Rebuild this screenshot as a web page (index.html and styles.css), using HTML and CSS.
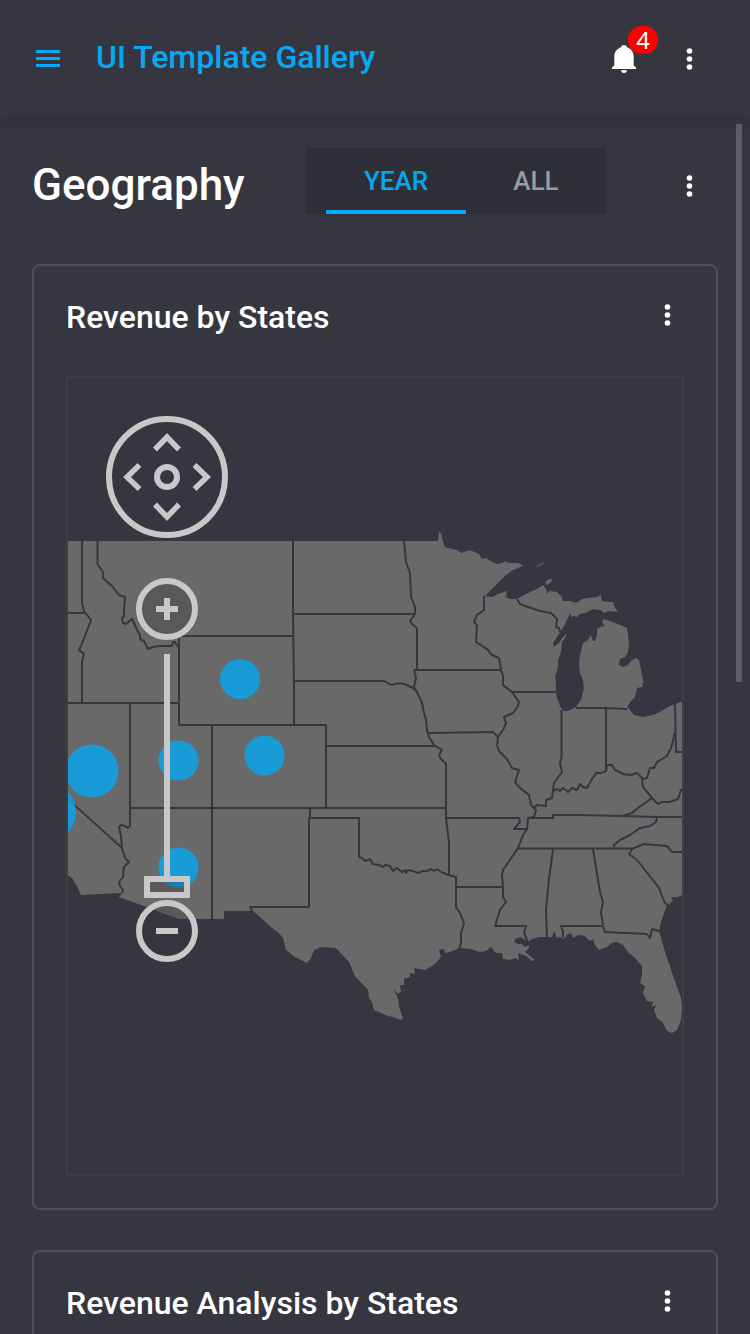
FILE: index.html
```html
<!DOCTYPE html>
<html lang="en">
<head>
<meta charset="utf-8">
<meta name="viewport" content="width=device-width, initial-scale=1">
<title>UI Template Gallery</title>
<link rel="stylesheet" href="styles.css">
</head>
<body>
<svg class="defs" aria-hidden="true">
  <symbol id="dots" viewBox="0 0 24 24">
    <circle cx="11.500" cy="4" r="2.800"/><circle cx="11.500" cy="12" r="2.800"/><circle cx="11.500" cy="20" r="2.800"/>
  </symbol>
  <symbol id="chevron" viewBox="0 0 36 36"><path d="M6 26.500L18 14L30 26.500" fill="none" stroke="currentColor" stroke-width="5.500"/></symbol>
</svg>
<div class="app">
  <header class="topbar">
    <button class="icon-btn menu-btn" type="button" aria-label="Menu">
      <svg width="24" height="18" viewBox="0 0 24 18" fill="currentColor"><path d="M0 0h24v3H0zM0 7h24v3H0zM0 14h24v3H0z"/></svg>
    </button>
    <span class="brand">UI Template Gallery</span>
    <button class="icon-btn bell-btn" type="button" aria-label="Notifications">
      <svg width="24" height="28" viewBox="0 0 24 28" fill="currentColor"><path d="M12 0c1.600 0 2.600.8 2.900 2.200C19 3.600 21.700 7 21.700 11.500V20.500L24 22.400V24H0v-1.600L2.300 20.500v-9C2.300 7 5 3.600 9.100 2.200 9.400.8 10.400 0 12 0zM9 25.200h6c-.2 1.700-1.400 2.800-3 2.800s-2.800-1.100-3-2.800z"/></svg>
      <span class="badge">4</span>
    </button>
    <button class="icon-btn" type="button" aria-label="More"><svg class="dots"><use href="#dots"/></svg></button>
  </header>

  <main class="content">
    <div class="page-head">
      <h1 class="page-title">Geography</h1>
      <div class="tabs" role="tablist">
        <button class="tab tab-active" type="button" role="tab" aria-selected="true">YEAR</button>
        <button class="tab" type="button" role="tab" aria-selected="false">ALL</button>
      </div>
      <button class="icon-btn" type="button" aria-label="Page options"><svg class="dots"><use href="#dots"/></svg></button>
    </div>

    <section class="card">
      <div class="card-head">
        <h2 class="card-title">Revenue by States</h2>
        <button class="icon-btn" type="button" aria-label="Card options"><svg class="dots"><use href="#dots"/></svg></button>
      </div>
      <div class="map">
        <svg class="map-canvas" viewBox="68 378 614 796" preserveAspectRatio="xMinYMin slice" role="img" aria-label="Map of the United States">
          <path class="land" d="M60 541H438L439 532L441 533L442.500 540L445 547L452 549L457 550L461 553L467 551L470 550.300L477 553L479 554L482 559L486 558L492 562L497 564L502 563L506 561L508 563H519L523 566L513 570L506 575L495 586L485 596L492 597L498 594L507 591L506 597L510 599H517L522 596L528 593L537 589L543 585L546 589L547 594L549 591L557 592L561 596L563 601H570L576 603L582 599L588 598L597 597L601 595L602 601L608 602H613L615 608L618 612L608 611L605 613L600 610L593 609L585 613L579 614L577 617L573 616L572 618L570 613L567 620L564 626L560 632L557 637L553 643L554 647L560 642L562 638L567 633L565 638L562 642L561 652L558 660V667L555 677L556 683V692L557 698L560 706L563 711H568L576 707L581 700L584 688L583 680L580 673L579 665L580 655L583 643L588 640L591 635L593 641H595L597 635V629L602 626L605 627L602 622L604 619L612 622L618 624L627 628L628 635L629 643L628 652L625 657L620 659L619 665L623 667L628 665L632 660L636 658L639 660L641 670L643.500 682L642 687L637 688L635 697L632 700L627 707L631 711L634 715L643 717L653 715L660 712L670 706L683 701L690 697V893L683 895L677 897H671L673 901L667 906L664 913L661 922L659 931L663 945L667 958L670 966L671 970L677 987L681 998L682 1007L681 1020L677 1030L672 1033L667 1031L663 1023L657 1018L654 1010L656 1005L652 1007L653 1002L647 1001L643 993L645 986L640 983L642 975V966L635 958L628 952L623 945L617 942L612 943L607 947L599 950L595 945L593 939L590 941L585 936L578 935L573 938L571 933L567 935L564 939L560 937L557 938L554 931L552 937L540 937L532 939L528 942L525 940L520 937L515 939L514 942L518 944L522 944L525 947L529 945V948L525 952L535 960L532 961L526 956L518 953L519 960L515 958L510 960L503 959L502 953H496L491 947L486 951L480 952L470 949L460 948L450 952L445 953L444 949L439 950L441 957L435 964L425 970L414 968L415 974L410 973V977L404 979V985H400L401 992L398 994L393 989L397 996L398 998L399 1007L403 1018L401 1020L393 1017L388 1016L374 1010L372 1002L369 998L368 990L355 976L349 962L336 948L321 947L314 950L311 958L307 963L295 957L286 950L283 938L279 933L272 928L260 917L253 911H224V919H179L119 897L122 893L81 895L78 888L75 883L72 878L67 875L60 870ZM536 566.500L544 562L543 564L537 567ZM545 582L548 580L553 578.500L550 583L547 585Z"/>
          <g class="borders">
            <path d="M82 541V603L84 611L91 620L88 628L81 646L79 650L84 654L82 662V703M60 613H84M97.500 541V564L103 572V578L112 586L119 595L125 597L124 610V616L122 618L123 623L126 624L132 619L134 623L138 632L140 635V639L144 641L148 649L153 647L159 646H172L173 642L175 642L178 647M293 541V614L294 690V725M179 636H293M179 636V725H326V808M60 703H179M130 703V826L128 828L125 826L121 825L119 827L121 836L122 848L125 858L129 862L124 867L123 877L119 882L120 886L123 890L122 893M60 792L122 848M130 808H446M212 725V919"/>
            <path d="M293 614H415M293 681H384L391 685L397 683.500H403L413 688L416 691M404 541L406 562L410 573L411 597L415 607V614L410 621L412 624L417 628V670M414 670H501M414 670L416 678L414 687L417 692L422 703L424 713L426 720L427 730L429 737L434 745L442 750L439 755L441 759L446 764V818L449 842V875M326 746H434M429 733L493 732L498 737M310 808V818M309 907H250L253 912M309 907V818H359V857L362 858L365 861L370 859L373 864L379 865L383 867L385 865L390 866L393 871L397 868L402 872L405 870L406 873L408 870L413 871L418 873L423 871L427 871L431 869L434 871L437 869L443 873L449 875L456 877V907L460 913L464 923L461 933V943L459 950M446 818H519L520 822L514 829H527M456 887H503"/>
            <path d="M484 596V610L477 615L474 622L477 625L476 642L487 649L492 655L499 658L501 670L503 675V685L512 692L519 702L517 708L513 713L504 717L506 723L503 730L498 737L497 745L499 751L507 759L512 768L519 770L515 782L520 788L529 795L531 805L536 810L534 817L528 818L527 829L523 835L518 848L512 857L503 870L502 876L503 887V897L506 902L500 910L495 926H526L524 933L528 942M512 692H556M517 599L520 604L528 607L540 611L551 613L557 619L556 627L559 628L560 632M561.500 710V758L560 763L562 772L554 783L552 798L546 800V806L537 805L534 808M553 791L557 789L560 791L563 788L568 792L572 788L577 790L580 784L583 787L587 788L592 779L595 775L596 773H601L606 771V708M606 771L607 765H612L615 770L623 774L631 775L637 773L643 779L647 778L650 768L654 768L657 762L667 756L671 748L674 737V733M576 708H606L627 709"/>
            <path d="M675 703L676 752H690M642 779L643 787L652 798L658 804L662 802H670L678 799L681 790L686 788M652 798L642 805L632 813L623 816M528 818H553V815H577L623 816L657 817H690M657 817L656 822L650 826L640 828L630 835L620 840L614 845V848M518 848.500H633L644 844L667 846L672 852H690M633 848L629 854L637 860L653 880L659 888L662 896L665 903L669 906M553 849L549 879L546 910L547 937M593 849L600 892L603 902L601 912L603 926L605 932L647 934L650 938L652 929L659 931M603 926H561L563 932V938"/>
          </g>
          <g class="bubbles">
            <circle cx="240" cy="679" r="20"/><circle cx="178.500" cy="760.500" r="20"/><circle cx="264.500" cy="755.500" r="20"/><circle cx="178.500" cy="867.500" r="20"/><circle cx="92" cy="771" r="26.500"/><circle cx="46" cy="812" r="30"/>
          </g>
        </svg>
        <div class="map-nav">
          <div class="pan">
            <button class="pan-up" type="button" aria-label="Pan up"><svg><use href="#chevron"/></svg></button>
            <button class="pan-left" type="button" aria-label="Pan left"><svg><use href="#chevron"/></svg></button>
            <button class="pan-home" type="button" aria-label="Reset view"></button>
            <button class="pan-right" type="button" aria-label="Pan right"><svg><use href="#chevron"/></svg></button>
            <button class="pan-down" type="button" aria-label="Pan down"><svg><use href="#chevron"/></svg></button>
          </div>
          <button class="zoom-btn" type="button" aria-label="Zoom in"><svg width="22" height="22" viewBox="0 0 22 22"><path d="M0 11H22M11 0V22" stroke="currentColor" stroke-width="6"/></svg></button>
          <input class="zoom-range" type="range" min="0" max="10" value="0" aria-label="Zoom level">
          <button class="zoom-btn" type="button" aria-label="Zoom out"><svg width="22" height="22" viewBox="0 0 22 22"><path d="M0 11H22" stroke="currentColor" stroke-width="6"/></svg></button>
        </div>
      </div>
    </section>

    <section class="card card-next">
      <div class="card-head">
        <h2 class="card-title">Revenue Analysis by States</h2>
        <button class="icon-btn" type="button" aria-label="Card options"><svg class="dots"><use href="#dots"/></svg></button>
      </div>
    </section>
  </main>
  <div class="scroll-thumb"></div>
</div>
</body>
</html>
```
FILE: styles.css
```css
* { box-sizing: border-box; }

body {
  margin: 0;
  background: #363640;
  color: #fff;
  font-family: Roboto, "Liberation Sans", sans-serif;
}

button {
  margin: 0;
  padding: 0;
  border: 0;
  background: none;
  color: inherit;
  font: inherit;
}

.defs { position: absolute; width: 0; height: 0; }

.app {
  position: relative;
  display: flex;
  flex-direction: column;
  height: 100vh;
  overflow: hidden;
}

.topbar {
  position: relative;
  z-index: 1;
  flex: none;
  display: flex;
  align-items: center;
  height: 116px;
  padding: 2px 36px 0 24px;
  background: #363640;
  box-shadow: 0 4px 16px rgba(0, 0, 0, 0.12);
}

.icon-btn {
  position: relative;
  flex: none;
  display: flex;
  align-items: center;
  justify-content: center;
  width: 48px;
  height: 48px;
}

.dots { width: 24px; height: 24px; fill: #fff; }

.menu-btn, .brand { color: #03a9f4; }

.brand {
  flex: 1;
  margin-left: 24px;
  padding-bottom: 4px;
  font-size: 32px;
  font-weight: 500;
  line-height: 40px;
}

.bell-btn { margin-right: 18px; }

.badge {
  position: absolute;
  top: -9px;
  left: 28px;
  width: 30px;
  height: 28px;
  border-radius: 14px;
  background: #f00;
  font-family: "Noto Sans", sans-serif;
  font-size: 24px;
  line-height: 28px;
  text-align: center;
}

.content {
  flex: 1;
  min-height: 0;
  padding: 32px;
  overflow: auto;
  scrollbar-width: none;
}

.page-head {
  display: flex;
  align-items: center;
  height: 76px;
  margin-bottom: 40px;
  padding-right: 4px;
}

.page-title {
  flex: 1;
  margin: 0;
  padding-bottom: 2px;
  font-size: 44px;
  font-weight: 500;
  line-height: 52px;
}

.tabs {
  display: flex;
  align-self: flex-start;
  height: 66px;
  margin-right: 60px;
  padding-left: 20px;
  background: #2f2f38;
}

.tab {
  width: 140px;
  padding-top: 4px;
  border-bottom: 4px solid transparent;
  color: #9b9b9f;
  font-size: 26px;
  font-weight: 500;
}

.tab-active {
  border-color: #03a9f4;
  color: #03a9f4;
}

.card {
  padding: 0 32px 32px;
  border: 2px solid #4e4e58;
  border-radius: 8px;
}

.card-next { min-height: 400px; margin-top: 40px; }

.card-head {
  display: flex;
  align-items: center;
  justify-content: space-between;
  height: 102px;
  margin: 0 -8px 8px 0;
}

.card-head .icon-btn { margin-bottom: 4px; }

.card-title {
  margin: 0;
  font-size: 32px;
  font-weight: 500;
  line-height: 40px;
}

.map {
  position: relative;
  height: 800px;
  border: 2px solid #3f3f40;
  overflow: hidden;
}

.map-canvas { display: block; width: 100%; height: 100%; }
.land { fill: #696969; }
.borders { fill: none; stroke: #363640; stroke-width: 2; stroke-linejoin: round; }
.bubbles { fill: #0ba4ea; fill-opacity: 0.85; }

.map-nav {
  position: absolute;
  top: 38px;
  left: 38px;
  display: flex;
  flex-direction: column;
  align-items: center;
  width: 122px;
  color: #c8c8c8;
}

.pan {
  display: grid;
  grid-template: repeat(3, 36px) / repeat(3, 36px);
  place-content: center;
  width: 122px;
  height: 122px;
  margin-bottom: 40px;
  border: 6px solid #c8c8c8;
  border-radius: 50%;
}

.pan svg { display: block; width: 36px; height: 36px; }
.pan-up { grid-area: 1 / 2; }
.pan-left { grid-area: 2 / 1; transform: rotate(-90deg); }
.pan-right { grid-area: 2 / 3; transform: rotate(90deg); }
.pan-down { grid-area: 3 / 2; transform: rotate(180deg); }

.pan-home {
  grid-area: 2 / 2;
  place-self: center;
  width: 26px;
  height: 26px;
  border: 6px solid #c8c8c8;
  border-radius: 50%;
}

.zoom-btn {
  display: flex;
  align-items: center;
  justify-content: center;
  width: 62px;
  height: 62px;
  border: 6px solid #c8c8c8;
  border-radius: 50%;
  background: rgba(54, 54, 64, 0.3);
}

.zoom-range {
  appearance: none;
  writing-mode: vertical-lr;
  direction: rtl;
  width: 46px;
  height: 244px;
  margin: 14px 0 2px;
  background: linear-gradient(#c8c8c8, #c8c8c8) top / 6px calc(100% - 22px) no-repeat;
}

.zoom-range::-webkit-slider-thumb {
  appearance: none;
  width: 46px;
  height: 22px;
  border: 6px solid #c8c8c8;
  background: rgba(54, 54, 64, 0.3);
}

.scroll-thumb {
  position: absolute;
  z-index: 2;
  top: 124px;
  right: 8px;
  width: 6px;
  height: 558px;
  background: #5e5e62;
}
```
